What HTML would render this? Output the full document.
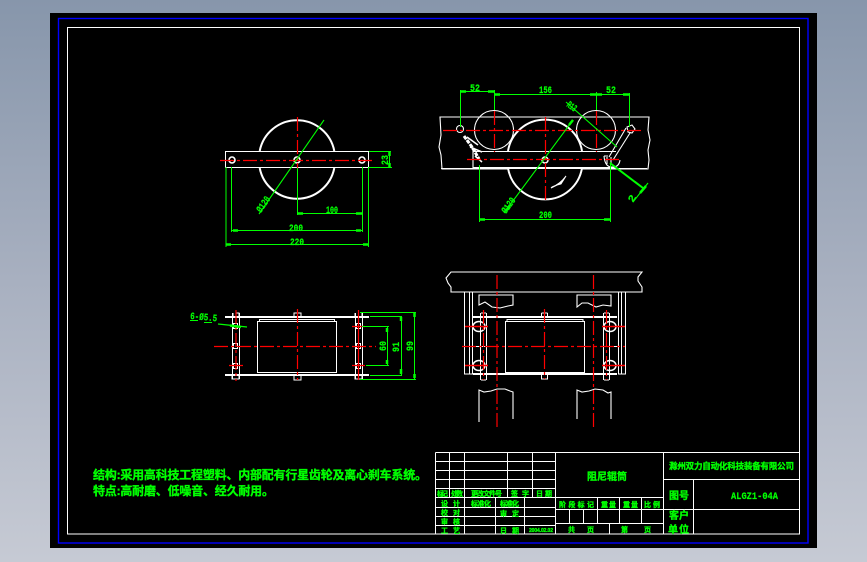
<!DOCTYPE html>
<html><head><meta charset="utf-8"><style>
html,body{margin:0;padding:0;width:867px;height:562px;overflow:hidden;background:linear-gradient(180deg,#8796ab 0%,#a8b0c0 50%,#c6cad4 100%)}
svg{position:absolute;left:0;top:0}
text{font-family:"Liberation Sans","WenQuanYi Zen Hei","Noto Sans CJK SC",sans-serif;fill:#0f0;stroke:#0f0;stroke-width:.35;font-weight:bold}
.m{font-family:"Liberation Mono",monospace;font-weight:bold;stroke-width:.2}
.w{stroke:#fff;fill:none;stroke-width:1.1}.g{stroke:#0f0;fill:none;stroke-width:1.1}.r{stroke:#f00;fill:none;stroke-width:1.2;stroke-dasharray:14 3 3 3}
.a{stroke:#0f0;stroke-width:2.5;fill:none}
</style></head><body>
<svg width="867" height="562" viewBox="0 0 867 562">
<rect x="50" y="13" width="767" height="535" fill="#000"/>
<rect x="58.500" y="18.500" width="749.500" height="524.500" fill="none" stroke="#00f" stroke-width="1.400"/>
<rect x="67.500" y="27.500" width="732" height="506.500" class="w" shape-rendering="crispEdges"/>

<!-- title block -->
<g class="w" shape-rendering="crispEdges">
<path d="M435.500 452.500H799.500M435.500 461.500H555.500M435.500 470.500H555.500M435.500 479.500H555.500M435.500 488.500H555.500M435.500 497.500H663.500M435.500 507.500H555.500M435.500 516.500H555.500M435.500 525.500H555.500M555.500 509.500H663.500M555.500 523.500H663.500M663.500 479.500H799.500M663.500 509.500H799.500"/>
<path d="M435.500 452.500V534M449.500 452.500V497.500M464.500 452.500V534M507.500 452.500V497.500M532.500 452.500V497.500M555.500 452.500V534M495.500 497.500V534M524.500 497.500V534M597.500 497.500V523.500M619.500 497.500V523.500M641.500 497.500V523.500M569.500 509.500V523.500M583.500 509.500V523.500M609.500 523.500V534M663.500 452.500V534M693.500 479.500V534"/>
</g>
<g font-size="7">
<text x="437" y="496" textLength="11">标记</text><text x="451" y="496" textLength="12">处数</text><text x="471" y="496" textLength="31">更改文件号</text><text x="511" y="496" textLength="18">签 字</text><text x="536" y="496" textLength="16">日 期</text>
<text x="441" y="506" textLength="19">设 计</text><text x="471" y="506" textLength="20">标准化</text><text x="500" y="506" textLength="19">标准化</text>
<text x="441" y="515" textLength="19">校 对</text><text x="500" y="516" textLength="19">审 定</text>
<text x="441" y="524" textLength="19">审 核</text>
<text x="441" y="533" textLength="19">工 艺</text><text x="500" y="533" textLength="19">日 期</text><text x="529" y="532" font-size="5" textLength="24">2004.02.02</text>
<text x="559" y="507" textLength="35">阶 段 标 记</text><text x="601" y="507" textLength="15">重 量</text><text x="623" y="507" textLength="15">重 量</text><text x="644" y="507" textLength="16">比 例</text>
<text x="568" y="532" textLength="26">共 　页</text><text x="621" y="532" textLength="30">第 　页</text>
</g>
<text x="587" y="480" font-size="10" textLength="40">阻尼辊筒</text>
<text x="669" y="469" font-size="8.500" textLength="125">滁州双力自动化科技装备有限公司</text>
<text x="669" y="499" font-size="10" textLength="20">图号</text>
<text x="731" y="499" font-size="10" class="m" textLength="47" lengthAdjust="spacingAndGlyphs">ALGZ1-04A</text>
<text x="669" y="519" font-size="10" textLength="20">客户</text>
<text x="668" y="533" font-size="10" textLength="21">单位</text>

<text x="93" y="479" font-size="12" textLength="334">结构:采用高科技工程塑料、内部配有行星齿轮及离心刹车系统。</text>
<text x="93" y="495" font-size="12" textLength="181">特点:高耐磨、低噪音、经久耐用。</text>

<!-- top-left view -->
<path class="w" style="stroke-width:2" d="M259.700 151A38 38 0 0 1 334.300 151M259.700 168A38 38 0 0 0 334.300 168"/>
<g class="w" shape-rendering="crispEdges"><rect x="225.500" y="151.500" width="143" height="16"/></g>
<g class="w" style="stroke-width:1.600"><circle cx="232" cy="160" r="3"/><circle cx="297" cy="160" r="3"/><circle cx="362" cy="160" r="3"/></g>
<g class="r"><path d="M220 160.500H375"/><path d="M297.500 117V168"/></g>
<g class="g" shape-rendering="crispEdges">
<path d="M231.500 167V232M362.500 167V232M297.500 168V215M226 167V247M368.500 167V247M297 213.500H362M232 230.500H362M226 244.500H369M369 151.500H391M369 167.500H392M389.500 151V168"/>
</g>
<path class="g" d="M324 120L259 214"/>
<path class="a" d="M298 213.500H303M356 213.500H362M233 230.500H238M356 230.500H361M226 244.500H231M363 244.500H368M389.500 152V156M389.500 163V167"/>
<g font-size="10">
<text class="m" x="326" y="213" textLength="12" lengthAdjust="spacingAndGlyphs">100</text><text class="m" x="289" y="231" textLength="14" lengthAdjust="spacingAndGlyphs">200</text><text class="m" x="290" y="245" textLength="14" lengthAdjust="spacingAndGlyphs">220</text>
<text class="m" transform="translate(388 165) rotate(-90)" textLength="10" lengthAdjust="spacingAndGlyphs">23</text>
<text class="m" transform="translate(261 213) rotate(-55)" textLength="17" lengthAdjust="spacingAndGlyphs">Ø120</text>
</g>

<!-- top-right view -->
<path class="w" d="M440 117H649L648 130 650 140 648 150 649 160 648 169H442L441 155 439 147 441 135Z"/>
<circle class="w" cx="494" cy="130" r="19.500"/>
<circle class="w" cx="596" cy="130" r="19.500"/>
<circle cx="545" cy="159.500" r="37.500" fill="#000"/>
<rect x="470" y="151" width="146" height="17" fill="#000"/>
<rect x="441" y="168" width="206" height="1" fill="#fff"/>
<path class="w" d="M473 169V151.500H616M473 167.500H616"/>
<path class="w" style="stroke-width:2" d="M508 151A37.500 37.500 0 0 1 582 151M508 168A37.500 37.500 0 0 0 582 168"/>
<circle class="w" cx="545" cy="160" r="3" style="stroke-width:1.500"/>
<path class="w" d="M627 127L632 125 635 129 632 133 628 132ZM630 133L613 160M626 128L609 157"/>
<path class="w" d="M604 156Q605 168 613 167 619 167 620 160M607 157V164M611 157V164M604 156H608"/>
<circle class="w" cx="460" cy="129" r="3.500"/>
<path class="w" style="stroke-width:3;stroke-dasharray:4 1" d="M464 136L472 147 479 159"/>
<path class="w" style="stroke-width:1.500" d="M467 137L478 145M470 147L482 152M475 156L482 162"/>
<path d="M566 176Q560 184 552 187L551 188 557 185 561 184Z" fill="#fff" stroke="#fff"/>
<g class="r"><path d="M443 130.500H641"/><path d="M467 159.500H622"/><path d="M494.500 111V152"/><path d="M596.500 111V152"/><path d="M545.500 117V203"/></g>
<g class="g" shape-rendering="crispEdges">
<path d="M460.500 90V127M494.500 90V110M596.500 92V110M629.500 93V127M479.500 165V222M610.500 162V222M460 91.500H494M494 94.500H629M479 219.500H610"/>
</g>
<path class="g" d="M573 120L504 213M566 102L617 147"/>
<path class="g" style="stroke-width:2" d="M610 163L643 188"/>
<path class="g" d="M648 183L633 202"/>
<path class="a" d="M461 91.500H466M488 91.500H494M495 94.500H500M590 94.500H596M597 94.500H602M623 94.500H629M480 219.500H485M604 219.500H610M506 211L510 205M569 125L573 120M640 193L646 186"/>
<g font-size="10">
<text class="m" x="470" y="91" textLength="10" lengthAdjust="spacingAndGlyphs">52</text><text class="m" x="539" y="93" textLength="13" lengthAdjust="spacingAndGlyphs">156</text><text class="m" x="606" y="93" textLength="10" lengthAdjust="spacingAndGlyphs">52</text>
<text class="m" x="539" y="218" textLength="13" lengthAdjust="spacingAndGlyphs">200</text>
<text class="m" transform="translate(506 214) rotate(-54)" textLength="17" lengthAdjust="spacingAndGlyphs">Ø120</text>
<text class="m" transform="translate(566 106) rotate(36)" textLength="10" lengthAdjust="spacingAndGlyphs">R13</text>
<text class="m" transform="translate(633 203) rotate(-60)" textLength="7" lengthAdjust="spacingAndGlyphs">2</text>
</g>

<!-- bottom-left view -->
<g class="w" shape-rendering="crispEdges">
<path style="stroke-width:2" d="M225 317H369M225 375H369"/>
<rect x="257.500" y="321.500" width="79" height="51"/>
<path d="M259.500 321V319.500H334.500V321M232.500 313V379M239.500 313V379M355.500 313V379M362.500 313V379"/>
<path d="M236 313H239V316M233 313V316M294 316V313H301V316M232 376V379H239V376M294 376V380H301V376M355 313V316M362 313V316M355 376V379H362V376"/>
<rect x="233.500" y="343.500" width="4" height="5"/><rect x="356.500" y="343.500" width="4" height="5"/>
<rect x="233.500" y="323.500" width="4" height="5"/><rect x="356.500" y="323.500" width="4" height="5"/><rect x="233.500" y="363.500" width="4" height="5"/><rect x="356.500" y="363.500" width="4" height="5"/>
</g>
<g class="r"><path d="M214 346.500H376"/><path d="M236 310V381"/><path d="M297.500 309V380"/><path d="M358.500 310V380" style="stroke-dasharray:none"/><path d="M229 365.500H243M352 326.500H365M352 365.500H365" style="stroke-dasharray:none"/></g>
<g class="g" shape-rendering="crispEdges">
<path d="M362 326.500H389M366 365.500H389M370 316.500H402M370 375.500H402M360 312.500H416M360 379.500H416M387.500 327V365M401.500 316V375M414.500 312V379"/>
<path d="M190 320.500H198M204 322.500H212"/>
</g>
<path class="a" d="M387 328V332M387 360V364M401 317V321M401 369V374M414.500 313V317M414.500 374V378M230 325.500L241 327"/>
<path class="g" style="stroke-width:1.300" d="M218 324L247 327"/>
<g font-size="10">
<text class="m" transform="translate(190 319) rotate(5)" textLength="27" lengthAdjust="spacingAndGlyphs">6-Ø5.5</text>
<text class="m" transform="translate(386 351) rotate(-90)" textLength="10" lengthAdjust="spacingAndGlyphs">60</text>
<text class="m" transform="translate(399 352) rotate(-90)" textLength="10" lengthAdjust="spacingAndGlyphs">91</text>
<text class="m" transform="translate(413 351) rotate(-90)" textLength="10" lengthAdjust="spacingAndGlyphs">99</text>
</g>

<!-- bottom-right view -->
<path class="w" d="M451 272H642L638 277 638 281 642 287V292H451V287L448 283 446 278Z"/>
<g class="w" shape-rendering="crispEdges">
<path d="M464.500 292V374H472.500V292M469.500 292V374M618.500 292V374H625.500V292M621.500 292V374"/>
<path style="stroke-width:2" d="M473 317H617M473 374H617"/>
<rect x="505.500" y="321.500" width="79" height="51"/>
<path d="M507 321V319.500H583V321"/>
<path d="M480.500 313V380M486.500 313V380M603.500 313V380M609.500 313V380M481 313H486M481 380H486M604 313H609M604 380H609M541.500 313V317M547.500 313V317M541.500 313H547.500M541.500 374V379H547.500V374M472 346.500H486M603 346.500H618"/>
</g>
<path class="w" d="M479 295H513V305L508 306 500 308 492 307 485 302 479 305Z"/>
<path class="w" d="M577 295H611V306L603 305 596 307 588 303 582 303 577 307Z"/>
<path class="w" d="M479 422V390L484 392 491 391 497 389 505 389 510 391 513 392V419"/>
<path class="w" d="M577 419V390L582 392 589 391 595 389 603 390 608 393 611 392V419"/>
<g class="w" style="stroke-width:1.500"><ellipse cx="479" cy="326.500" rx="6" ry="5"/><ellipse cx="479" cy="365.500" rx="6" ry="5"/><ellipse cx="610" cy="326.500" rx="6" ry="5"/><ellipse cx="610" cy="365.500" rx="6" ry="5"/></g>
<g class="r"><path d="M497 275V428"/><path d="M593.500 275V430"/><path d="M544.500 309V379"/><path d="M483.500 310V380"/><path d="M606.500 310V380"/><path d="M462 346.500H625"/><path d="M465 326.500H488M465 365.500H488M602 326.500H625M602 365.500H625" style="stroke-dasharray:none;stroke-width:1.500"/></g>
</svg>
</body></html>
